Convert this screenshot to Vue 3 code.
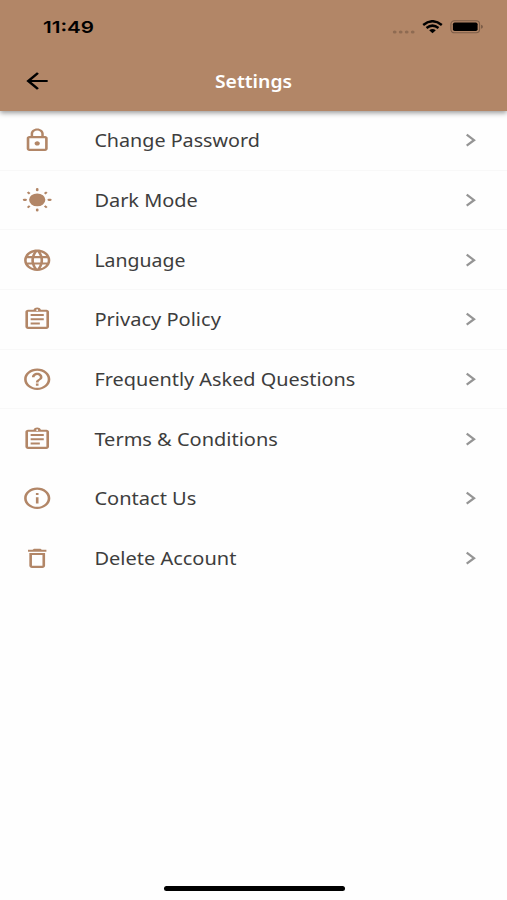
<script setup>
const icons = {
  lock: 'M12 17c1.1 0 2-.9 2-2s-.9-2-2-2-2 .9-2 2 .9 2 2 2zm6-9h-1V6c0-2.76-2.24-5-5-5S7 3.24 7 6v2H6c-1.1 0-2 .9-2 2v10c0 1.1.9 2 2 2h12c1.1 0 2-.9 2-2V10c0-1.1-.9-2-2-2zM8.9 6c0-1.71 1.39-3.1 3.1-3.1s3.1 1.39 3.1 3.1v2H8.9V6zM18 20H6V10h12v10z',
  sun: 'M12 5.6a6.2 6 0 1 0 0 12a6.2 6 0 1 0 0-12zM11 1.6a1 1 0 0 1 2 0v1a1 1 0 0 1-2 0zM11 20.6a1 1 0 0 1 2 0v1a1 1 0 0 1-2 0zM2 10.6h1.2a1 1 0 0 1 0 2H2a1 1 0 0 1 0-2zM20.8 10.6H22a1 1 0 0 1 0 2h-1.2a1 1 0 0 1 0-2zM4.1 4.9L5.3 3.7L6.9 5.3L5.7 6.5zM17.1 5.3L18.7 3.7L19.9 4.9L18.3 6.5zM4.1 18.3L5.7 16.7L6.9 17.9L5.3 19.5zM17.1 17.9L18.3 16.7L19.9 18.3L18.7 19.5z',
  globe: 'M11.99 2C6.47 2 2 6.48 2 12s4.47 10 9.99 10C17.52 22 22 17.52 22 12S17.52 2 11.99 2zm6.93 6h-2.95c-.32-1.25-.78-2.45-1.38-3.56 1.84.63 3.37 1.91 4.33 3.56zM12 4.04c.83 1.2 1.48 2.53 1.91 3.96h-3.82c.43-1.43 1.08-2.76 1.91-3.96zM4.26 14C4.1 13.36 4 12.69 4 12s.1-1.36.26-2h3.38c-.08.66-.14 1.32-.14 2s.06 1.34.14 2H4.26zm.82 2h2.95c.32 1.25.78 2.45 1.38 3.56-1.84-.63-3.37-1.9-4.33-3.56zm2.95-8H5.08c.96-1.66 2.49-2.93 4.33-3.56C8.81 5.55 8.35 6.75 8.03 8zM12 19.96c-.83-1.2-1.48-2.53-1.91-3.96h3.82c-.43 1.43-1.08 2.76-1.91 3.96zM14.34 14H9.66c-.09-.66-.16-1.32-.16-2s.07-1.35.16-2h4.68c.09.65.16 1.32.16 2s-.07 1.34-.16 2zm.25 5.56c.6-1.11 1.06-2.31 1.38-3.56h2.95c-.96 1.65-2.49 2.93-4.33 3.56zM16.36 14c.08-.66.14-1.32.14-2s-.06-1.34-.14-2h3.38c.16.64.26 1.31.26 2s-.1 1.36-.26 2h-3.38z',
  clipboard: 'M7 15h7v2H7zm0-4h10v2H7zm0-4h10v2H7zm12-4h-4.18C14.4 1.84 13.3 1 12 1s-2.4.84-2.82 2H5c-1.1 0-2 .9-2 2v14c0 1.1.9 2 2 2h14c1.1 0 2-.9 2-2V5c0-1.1-.9-2-2-2zm-7-.25c.41 0 .75.34.75.75s-.34.75-.75.75-.75-.34-.75-.75.34-.75.75-.75zM19 19H5V5h14v14z',
  help: 'M11 18h2v-2h-2v2zm1-16C6.48 2 2 6.48 2 12s4.48 10 10 10 10-4.48 10-10S17.52 2 12 2zm0 18c-4.41 0-8-3.59-8-8s3.59-8 8-8 8 3.59 8 8-3.59 8-8 8zm0-14c-2.21 0-4 1.79-4 4h2c0-1.1.9-2 2-2s2 .9 2 2c0 2-3 1.75-3 5h2c0-2.25 3-2.5 3-5 0-2.21-1.79-4-4-4z',
  info: 'M11 7h2v2h-2zm0 4h2v6h-2zm1-9C6.48 2 2 6.48 2 12s4.48 10 10 10 10-4.48 10-10S17.52 2 12 2zm0 18c-4.41 0-8-3.59-8-8s3.59-8 8-8 8 3.59 8 8-3.59 8-8 8z',
  trash: 'M6 19c0 1.1.9 2 2 2h8c1.1 0 2-.9 2-2V7H6v12zM8 9h8v10H8V9zm7.5-5l-1-1h-5l-1 1H5v2h14V4z',
}
const items = [
  { label: 'Change Password', icon: 'lock', width: 165.5 },
  { label: 'Dark Mode', icon: 'sun', width: 103.5 },
  { label: 'Language', icon: 'globe', width: 91 },
  { label: 'Privacy Policy', icon: 'clipboard', width: 126.5 },
  { label: 'Frequently Asked Questions', icon: 'help', width: 261 },
  { label: 'Terms & Conditions', icon: 'clipboard', width: 183.5 },
  { label: 'Contact Us', icon: 'info', width: 102 },
  { label: 'Delete Account', icon: 'trash', width: 142 },
]
</script>

<template>
  <div class="screen">
    <header class="header">
      <div class="status">
        <svg class="time" width="60" height="24"><text x="0" y="18.4" textLength="51" lengthAdjust="spacingAndGlyphs">11:49</text></svg>
        <div class="indicators">
          <svg class="dots" width="24" height="6" viewBox="0 0 24 6">
            <ellipse v-for="n in 4" :key="n" :cx="n * 6 - 3.3" cy="3" rx="1.9" ry="1.6" />
          </svg>
          <svg class="wifi" width="21" height="14" viewBox="0 0 21 14">
            <path d="M1.2 4.9Q10.5-2.4 19.8 4.9M4.5 7.9Q10.5 3.3 16.5 7.9" />
            <path class="solid" d="M7.2 10.3Q10.5 7.9 13.8 10.3L10.5 13.2Z" />
          </svg>
          <svg class="battery" width="34" height="14" viewBox="0 0 34 14">
            <rect class="case" x=".9" y=".8" width="28.7" height="12" rx="3.5" />
            <rect x="2.9" y="2.5" width="24.7" height="8.6" rx="1.8" />
            <path class="tip" d="M31 4.8q2 .5 2 2t-2 2z" />
          </svg>
        </div>
      </div>
      <nav class="bar">
        <svg class="back" width="32" height="26" viewBox="0 0 24 24" preserveAspectRatio="none"><path d="M20 11H7.83l5.59-5.59L12 4l-8 8 8 8 1.41-1.41L7.83 13H20v-2z" /></svg>
        <svg class="title" width="78" height="30"><text x="0" y="22" textLength="77" lengthAdjust="spacingAndGlyphs">Settings</text></svg>
      </nav>
    </header>
    <main class="list">
      <div v-for="item in items" :key="item.label" class="row">
        <svg class="icon" viewBox="-0.35 -0.4 24 24" preserveAspectRatio="none"><path :d="icons[item.icon]" /></svg>
        <svg class="label" width="300" height="30"><text x="0.4" y="22" :textLength="item.width" lengthAdjust="spacingAndGlyphs">{{ item.label }}</text></svg>
        <svg class="chevron" width="12" height="14" viewBox="0 0 12 14"><path d="M1.7 1.7L9 7.2l-7.3 5.5" /></svg>
      </div>
    </main>
    <footer class="home"><div class="handle"></div></footer>
  </div>
</template>

<style>
body { background: #fefefe; }
</style>

<style scoped>
.screen {
  width: 507px;
  height: 900px;
  display: flex;
  flex-direction: column;
  overflow: hidden;
  background: #fefefe;
  font-family: "Noto Sans", "Open Sans", sans-serif;
}
svg { display: block; flex: none; }
.header {
  flex: none;
  height: 110.5px;
  background: #b28667;
  box-shadow: 0 2px 5px rgba(0, 0, 0, .4);
}
.status {
  height: 52px;
  display: flex;
  justify-content: space-between;
  padding: 15px 23px 0 43px;
  box-sizing: border-box;
}
.time text { font: 600 16.5px Inter, sans-serif; }
.indicators { display: flex; align-items: flex-start; padding-top: 5px; }
.dots { margin: 8.5px 6px 0 0; fill: #8e6b52; }
.wifi { margin-right: 7px; fill: none; stroke: #000; stroke-width: 2.5; }
.wifi .solid { fill: #000; stroke: none; }
.battery .case { fill: none; stroke: #7c5d48; stroke-width: 1.1; }
.battery .tip { fill: #7c5d48; }
.bar {
  height: 58px;
  display: grid;
  grid-template-columns: 1fr 78px 1fr;
  align-items: center;
}
.back { margin-left: 21px; }
.title text { font-size: 18px; font-weight: 600; fill: #fff; }
.list { padding-top: .5px; }
.row {
  height: 59.65px;
  box-sizing: border-box;
  display: grid;
  grid-template-columns: 94px 1fr 42px;
  align-items: center;
  border-bottom: 1px solid #f8f8f8;
}
.row:nth-child(n+6) { border-color: transparent; }
.icon { width: 31.5px; height: 25.7px; margin-left: 21px; fill: #b28667; }
.label text { font-size: 17.3px; fill: #3d3d3d; }
.chevron { fill: none; stroke: #959595; stroke-width: 2.3; }
.home { margin-top: auto; height: 14px; display: flex; justify-content: center; align-items: flex-start; }
.handle { width: 181px; height: 5px; border-radius: 3px; margin-left: 1px; background: #000; }
</style>
